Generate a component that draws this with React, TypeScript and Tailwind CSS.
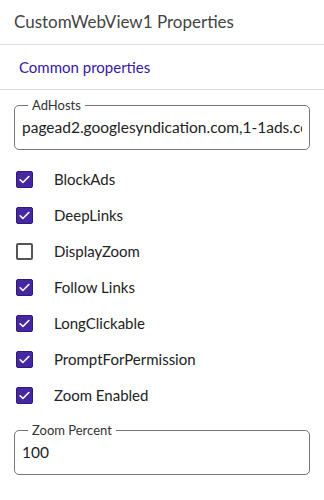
import React from "react";

const font = { fontFamily: "Lato, 'Open Sans', sans-serif" };

const props: { label: string; checked: boolean }[] = [
    { label: "BlockAds", checked: true },
    { label: "DeepLinks", checked: true },
    { label: "DisplayZoom", checked: false },
    { label: "Follow Links", checked: true },
    { label: "LongClickable", checked: true },
    { label: "PromptForPermission", checked: true },
    { label: "Zoom Enabled", checked: true },
];

const CheckBox: React.FC<{ checked: boolean }> = ({ checked }) =>
    checked ? (
        <span className="flex h-[17px] w-[17px] items-center justify-center rounded-[2px] border border-[#2f1a7a] bg-[#4527a0]">
            <svg width="13" height="13" viewBox="0 0 24 24" fill="none">
                <path
                    d="M4 12.5l5 5L20 6.5"
                    stroke="#fff"
                    strokeWidth="3"
                    strokeLinecap="round"
                    strokeLinejoin="round"
                />
            </svg>
        </span>
    ) : (
        <span className="block h-[17px] w-[17px] rounded-[2px] border-2 border-[#555] bg-white" />
    );

const OutlinedField: React.FC<{ label: string; value: string }> = ({
    label,
    value,
}) => (
    <fieldset className="mx-[14px] min-w-0 rounded-[5px] border border-[#777] px-[7px]">
        <legend className="ml-[6px] px-[4px] text-[13px] leading-4 text-[#333]">
            {label}
        </legend>
        <div className="overflow-hidden whitespace-nowrap pt-[2px] pb-[10px] text-[15.5px] leading-6 text-[#222]">
            {value}
        </div>
    </fieldset>
);

export default function App() {
    return (
        <div className="h-[500px] w-[324px] overflow-hidden bg-white" style={font}>
            <div className="flex h-[45px] items-center border-b border-[#ddd] px-[14px] text-[17px] text-[#444]">
                CustomWebView1 Properties
            </div>
            <div className="flex h-[45px] items-center border-b border-[#ddd] px-[19px] text-[15px] text-[#3419a6]">
                Common properties
            </div>
            <div className="pt-[7px]">
                <OutlinedField
                    label="AdHosts"
                    value="pagead2.googlesyndication.com,1-1ads.com"
                />
            </div>
            <div className="mt-[11px] flex flex-col">
                {props.map((p) => (
                    <div key={p.label} className="flex h-[36px] items-center gap-[21px] pl-[16px]">
                        <CheckBox checked={p.checked} />
                        <span className="text-[15px] text-[#222]">{p.label}</span>
                    </div>
                ))}
            </div>
            <div className="mt-[9px]">
                <OutlinedField label="Zoom Percent" value="100" />
            </div>
        </div>
    );
}
